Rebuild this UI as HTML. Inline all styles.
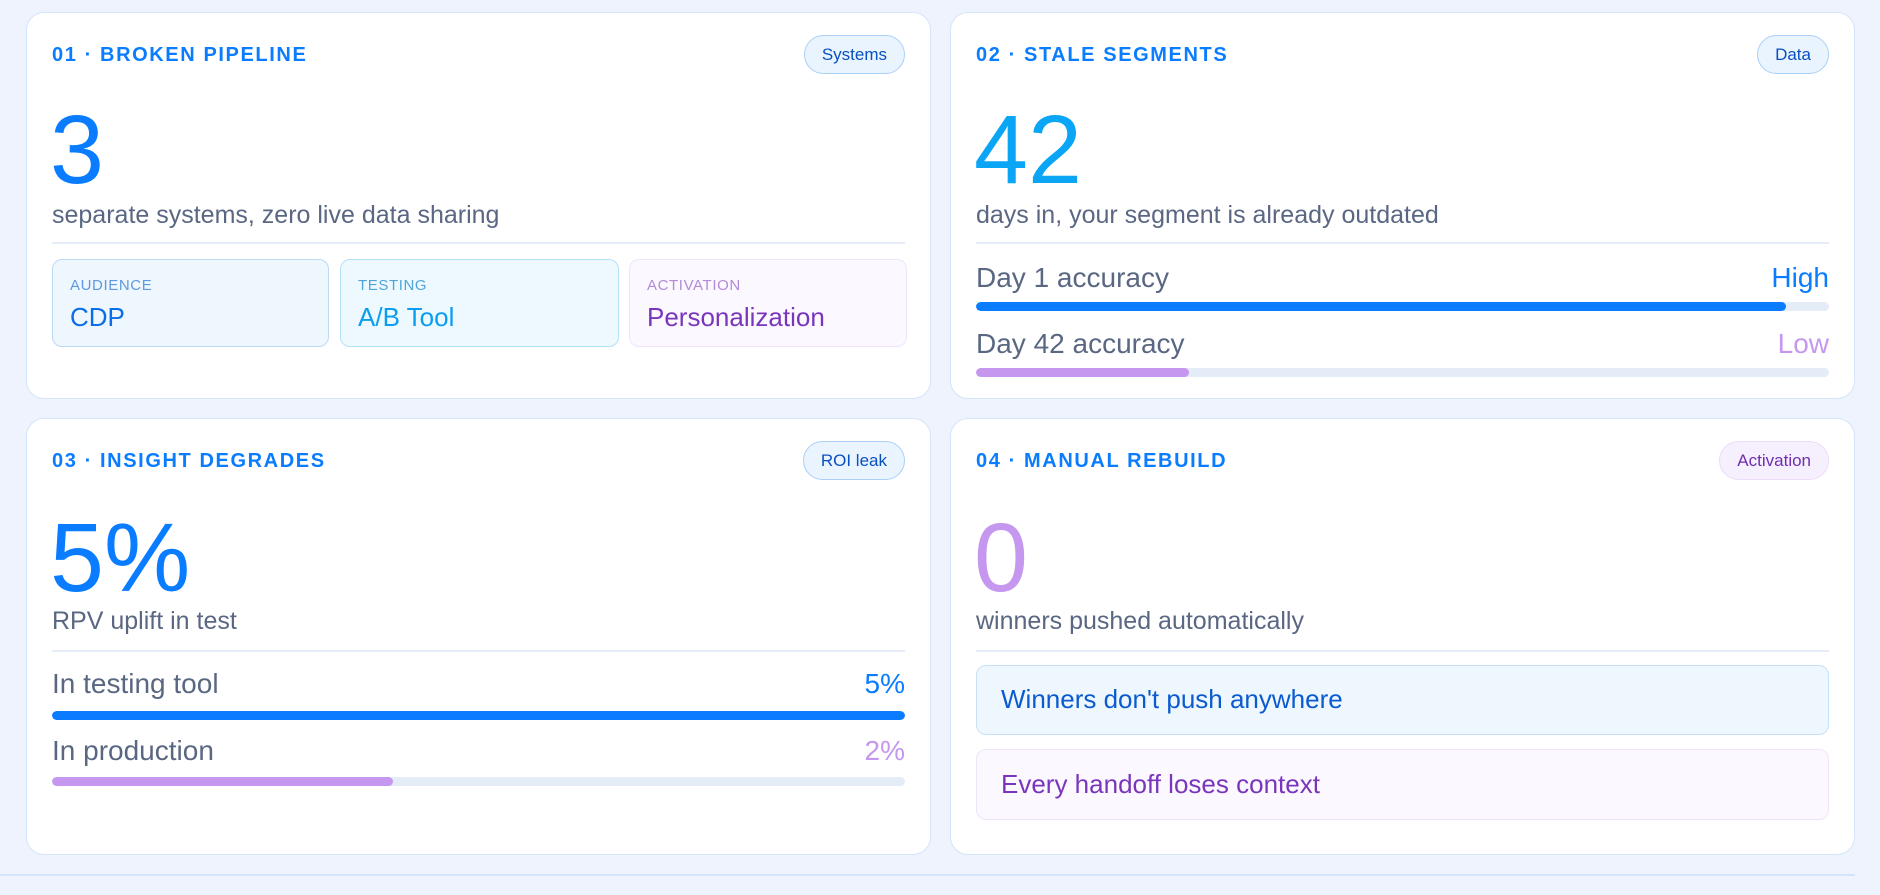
<!DOCTYPE html>
<html><head><meta charset="utf-8"><style>
*{margin:0;padding:0;box-sizing:border-box}
body{width:1880px;height:895px;background:#eef3fd;font-family:"Liberation Sans",sans-serif;position:relative;overflow:hidden}
.card{position:absolute;background:#fff;border:1.5px solid #d5e5f8;border-radius:18px}
.c1{left:26px;top:12px;width:905px;height:387px}
.c2{left:950px;top:12px;width:905px;height:387px}
.c3{left:26px;top:418px;width:905px;height:437px}
.c4{left:950px;top:418px;width:905px;height:437px}
.card>*{position:absolute}
.title{left:25px;top:31px;font-size:20px;line-height:22px;font-weight:bold;color:#0a7cff;letter-spacing:1.6px}
.pill{right:25px;top:22px;height:39px;border-radius:20px;padding:0 17px;font-size:17px;line-height:37px;border:1.5px solid #aad0f7;background:#eaf4ff;color:#0a4fc0}
.pill.p{border-color:#ecdcf9;background:#f6effd;color:#6f2fb0}
.num{left:23px;font-size:97px;line-height:97px;color:#0a7cff}
.sub{left:25px;font-size:25px;line-height:26px;color:#5a6782}
.div{left:25px;right:25px;height:1.5px;background:#e3ecf7}
.box{top:246px;height:88px;border-radius:10px;border:1.5px solid #bcdaf6}
.box .l{position:absolute;left:17px;top:17px;font-size:15px;letter-spacing:.6px}
.box .v{position:absolute;left:17px;top:42px;font-size:26px}
.row{left:25px;right:25px;font-size:28px;line-height:30px;color:#5a6782}
.row span{position:absolute;right:0;top:0}
.bar{left:25px;right:25px;height:9px;border-radius:5px;background:#e4ecf7;overflow:hidden}
.bar i{display:block;height:100%;border-radius:5px}
.msg{left:25px;right:25px;border-radius:10px;font-size:26px;padding-left:24px}
</style></head><body>

<div class="card c1">
 <div class="title">01 · BROKEN PIPELINE</div>
 <div class="pill">Systems</div>
 <div class="num" style="top:88px">3</div>
 <div class="sub" style="top:189px">separate systems, zero live data sharing</div>
 <div class="div" style="top:229px"></div>
 <div class="box" style="left:25px;width:277px;background:#eef6fe;border-color:#bcdaf6"><div class="l" style="color:#5f9ae0">AUDIENCE</div><div class="v" style="color:#0a6ee8">CDP</div></div>
 <div class="box" style="left:313px;width:279px;background:#eef9ff;border-color:#b3e1f8"><div class="l" style="color:#4ea6d8">TESTING</div><div class="v" style="color:#0a9ef0">A/B Tool</div></div>
 <div class="box" style="left:602px;width:278px;background:#fbf8ff;border-color:#efe3fa"><div class="l" style="color:#b28ad8">ACTIVATION</div><div class="v" style="color:#7a36bb">Personalization</div></div>
</div>

<div class="card c2">
 <div class="title">02 · STALE SEGMENTS</div>
 <div class="pill">Data</div>
 <div class="num" style="top:88px;color:#0aa6f5">42</div>
 <div class="sub" style="top:189px">days in, your segment is already outdated</div>
 <div class="div" style="top:229px"></div>
 <div class="row" style="top:250px">Day 1 accuracy<span style="color:#0a7cff">High</span></div>
 <div class="bar" style="top:289px"><i style="width:95%;background:#0a7cff"></i></div>
 <div class="row" style="top:316px">Day 42 accuracy<span style="color:#c597ef">Low</span></div>
 <div class="bar" style="top:355px"><i style="width:25%;background:#c597ef"></i></div>
</div>

<div class="card c3">
 <div class="title">03 · INSIGHT DEGRADES</div>
 <div class="pill">ROI leak</div>
 <div class="num" style="top:90px">5%</div>
 <div class="sub" style="top:189px">RPV uplift in test</div>
 <div class="div" style="top:231px"></div>
 <div class="row" style="top:250px">In testing tool<span style="color:#0a7cff">5%</span></div>
 <div class="bar" style="top:292px"><i style="width:100%;background:#0a7cff"></i></div>
 <div class="row" style="top:317px">In production<span style="color:#c597ef">2%</span></div>
 <div class="bar" style="top:358px"><i style="width:40%;background:#c597ef"></i></div>
</div>

<div class="card c4">
 <div class="title">04 · MANUAL REBUILD</div>
 <div class="pill p">Activation</div>
 <div class="num" style="top:90px;color:#c597ef">0</div>
 <div class="sub" style="top:189px">winners pushed automatically</div>
 <div class="div" style="top:231px"></div>
 <div class="msg" style="top:246px;height:70px;line-height:67px;background:#eff7fe;border:1.5px solid #c9e1f7;color:#0a5bd0">Winners don't push anywhere</div>
 <div class="msg" style="top:330px;height:71px;line-height:68px;background:#fbf8ff;border:1.5px solid #efe3fa;color:#7a36bb">Every handoff loses context</div>
</div>

<div style="position:absolute;left:0;top:874px;width:1855px;height:1.5px;background:#d5e5f8"></div>
</body></html>
